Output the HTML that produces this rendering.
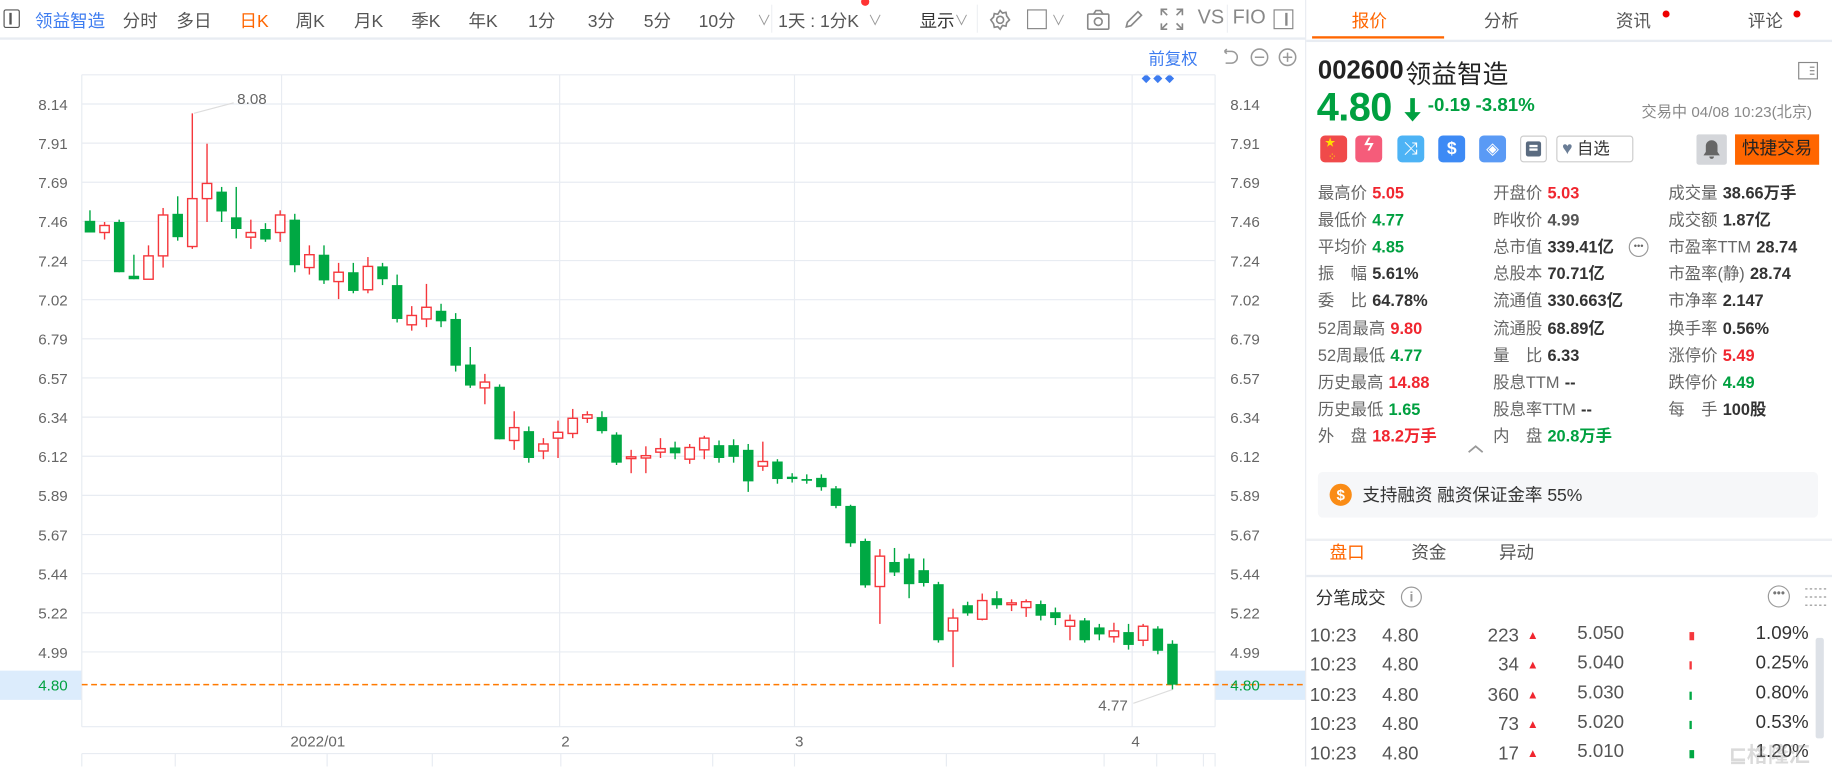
<!DOCTYPE html>
<html><head><meta charset="utf-8">
<style>
*{margin:0;padding:0;box-sizing:border-box}
html,body{width:1832px;height:766px;overflow:hidden;background:#fff}
#root{position:absolute;left:0;top:0;width:1568px;height:656px;transform:scale(1.16837);transform-origin:0 0;font-family:"Liberation Sans","Noto Sans CJK SC",sans-serif;color:#333}
.a{position:absolute;white-space:nowrap}
.tb{font-size:15px;color:#555;top:7px}
.ax{font-size:13px;color:#666}
.lab{color:#666;font-size:14px}
.v{font-weight:bold;font-size:14px}
.r{color:#f0262f}.g{color:#00a040}.d{color:#333}
.row{font-size:16px;color:#555}
</style></head><body><div id="root">
<div class="a" style="left:3px;top:8px;width:14px;height:16px;border:1.5px solid #555;border-radius:2px"></div>
<div class="a" style="left:8px;top:11px;width:2px;height:10px;background:#555"></div>
<div class="a tb" style="left:30px;color:#3d7cf0">领益智造</div>
<div class="a tb" style="left:105px">分时</div>
<div class="a tb" style="left:151px">多日</div>
<div class="a tb" style="left:205px;color:#ff6600">日K</div>
<div class="a tb" style="left:253px">周K</div>
<div class="a tb" style="left:303px">月K</div>
<div class="a tb" style="left:352px">季K</div>
<div class="a tb" style="left:401px">年K</div>
<div class="a tb" style="left:452px">1分</div>
<div class="a tb" style="left:503px">3分</div>
<div class="a tb" style="left:551px">5分</div>
<div class="a tb" style="left:598px">10分</div>
<div class="a tb" style="left:648px;font-size:12px;top:9px;color:#999">∨</div>
<div class="a" style="left:660px;top:4px;width:1px;height:24px;background:#eef0f3"></div>
<div class="a tb" style="left:666px">1天 : 1分K</div>
<div class="a tb" style="left:743px;font-size:12px;top:9px;color:#999">∨</div>
<div class="a" style="left:737px;top:-2px;width:7px;height:7px;border-radius:50%;background:#f33"></div>
<div class="a tb" style="left:787px;color:#333">显示</div>
<div class="a tb" style="left:817px;font-size:12px;top:9px;color:#999">∨</div>
<div class="a" style="left:836px;top:4px;width:1px;height:24px;background:#eef0f3"></div>
<svg class="a" style="left:846px;top:7px" width="20" height="20" viewBox="0 0 20 20" fill="none" stroke="#888" stroke-width="1.4"><circle cx="10" cy="10" r="3"/><path d="M10 2l2 2.2 3-.6.6 3L18 10l-2.4 2.4-.6 3-3-.6L10 18l-2-2.2-3 .6-.6-3L2 10l2.4-2.4.6-3 3 .6z"/></svg>
<div class="a" style="left:879px;top:8px;width:17px;height:17px;border:1.5px solid #888"></div>
<div class="a tb" style="left:900px;font-size:12px;top:9px;color:#999">∨</div>
<svg class="a" style="left:930px;top:8px" width="20" height="18" viewBox="0 0 20 18" fill="none" stroke="#888" stroke-width="1.4"><rect x="1" y="4" width="18" height="13" rx="1"/><path d="M6 4l2-3h4l2 3"/><circle cx="10" cy="10.5" r="3.3"/></svg>
<svg class="a" style="left:961px;top:7px" width="19" height="19" viewBox="0 0 19 19" fill="none" stroke="#888" stroke-width="1.4"><path d="M3 16l1-4L13 3l3 3-9 9z"/></svg>
<svg class="a" style="left:993px;top:7px" width="20" height="19" viewBox="0 0 20 19" fill="none" stroke="#888" stroke-width="1.4"><path d="M1 6V1h5M14 1h5v5M19 13v5h-5M6 18H1v-5M1 1l5 5M19 1l-5 5M19 18l-5-5M1 18l5-5"/></svg>
<div class="a tb" style="left:1025px;color:#888;font-size:17px;top:5px">VS</div>
<div class="a" style="left:1050px;top:4px;width:1px;height:24px;background:#eef0f3"></div>
<div class="a tb" style="left:1055px;color:#888;font-size:17px;top:5px">FIO</div>
<div class="a" style="left:1090px;top:8px;width:17px;height:17px;border:1.5px solid #888"></div>
<div class="a" style="left:1100px;top:11px;width:1.5px;height:11px;background:#888"></div>
<div class="a" style="left:0;top:32px;width:1117px;height:2px;background:#e8ecf2"></div>
<div class="a" style="left:983px;top:40px;font-size:14px;color:#3d7cf0">前复权</div>
<svg class="a" style="left:1044px;top:40px" width="70" height="18" viewBox="0 0 70 18" fill="none" stroke="#999" stroke-width="1.3"><path d="M4 4h6a5 5 0 010 10H5M4 4l2-2M4 4l2 2"/><circle cx="34" cy="9" r="7"/><path d="M30 9h8"/><circle cx="58" cy="9" r="7"/><path d="M54 9h8M58 5v8"/></svg>
<div class="a" style="left:977px;top:62px;font-size:8px;color:#3d7cf0;letter-spacing:2px">◆◆◆</div>
<svg class="a" style="left:0;top:0" width="1117" height="656" id="ch"></svg>
<div class="a" style="left:1117px;top:0;width:1px;height:656px;background:#e8ecf2"></div>
<div class="a" style="left:1118px;top:34px;width:450px;height:1.5px;background:#e8ecf2"></div>
<div class="a" style="left:1157px;top:7px;font-size:15px;color:#ff6600">报价</div>
<div class="a" style="left:1123px;top:31px;width:113px;height:2px;background:#ff6600"></div>
<div class="a" style="left:1270px;top:7px;font-size:15px;color:#555">分析</div>
<div class="a" style="left:1383px;top:7px;font-size:15px;color:#555">资讯</div>
<div class="a" style="left:1423px;top:9px;width:6px;height:6px;border-radius:50%;background:#e00"></div>
<div class="a" style="left:1496px;top:7px;font-size:15px;color:#555">评论</div>
<div class="a" style="left:1535px;top:9px;width:6px;height:6px;border-radius:50%;background:#e00"></div>
<div class="a" style="left:1128px;top:47px;font-size:22px;font-weight:bold;color:#222">002600</div>
<div class="a" style="left:1203px;top:46px;font-size:22px;color:#222">领益智造</div>
<div class="a" style="left:1539px;top:53px;width:17px;height:15px;border:1.3px solid #888"></div>
<div class="a" style="left:1549px;top:57px;width:4px;height:1.3px;background:#888;box-shadow:0 3px #888,0 6px #888"></div>
<div class="a" style="left:1127px;top:73px;font-size:34px;font-weight:bold;color:#00a040;letter-spacing:-0.5px">4.80</div>
<svg class="a" style="left:1200px;top:83px" width="18" height="22" viewBox="0 0 18 22"><path d="M7 1h4v12h5l-7 8-7-8h5z" fill="#00a040"/></svg>
<div class="a" style="left:1222px;top:82px;font-size:16px;font-weight:bold;color:#00a040">-0.19 -3.81%</div>
<div class="a" style="left:1405px;top:85px;font-size:13px;color:#888">交易中 04/08 10:23(北京)</div>
<div class="a" style="left:1130px;top:116px;width:23px;height:23px;border-radius:4px;background:#f04a4a;color:#ffde00;font-size:9px;line-height:12px;padding-left:4px">★<br>&nbsp;⁘</div>
<div class="a" style="left:1160px;top:116px;width:23px;height:23px;border-radius:4px;background:#f55c7a;color:#fff;font-size:15px;text-align:center;font-weight:bold;font-style:italic">ϟ</div>
<div class="a" style="left:1196px;top:116px;width:23px;height:23px;border-radius:4px;background:#4db3f5;color:#fff;font-size:15px;text-align:center;line-height:23px">⤨</div>
<div class="a" style="left:1231px;top:116px;width:23px;height:23px;border-radius:4px;background:#3d8af5;color:#fff;font-size:15px;text-align:center;line-height:23px;font-weight:bold">$</div>
<div class="a" style="left:1266px;top:116px;width:23px;height:23px;border-radius:4px;background:#5a9af5;color:#fff;font-size:14px;text-align:center;line-height:23px">◈</div>
<div class="a" style="left:1301px;top:116px;width:23px;height:23px;border-radius:3px;border:1px solid #ccc;"></div>
<div class="a" style="left:1306px;top:121px;width:13px;height:13px;background:#5a6b80;border-radius:2px"></div>
<div class="a" style="left:1309px;top:124px;width:7px;height:1.5px;background:#fff;box-shadow:0 3px #fff"></div>
<div class="a" style="left:1332px;top:116px;width:66px;height:23px;border-radius:3px;border:1px solid #ccc;font-size:14px;line-height:21px;padding-left:4px;color:#333"><span style="color:#6a7d96;font-size:15px">♥</span> 自选</div>
<div class="a" style="left:1452px;top:115px;width:26px;height:26px;border-radius:2px;background:#d4d6da"></div>
<svg class="a" style="left:1457px;top:119px" width="16" height="18" viewBox="0 0 16 18"><path d="M8 1a5 5 0 015 5v5l2 3H1l2-3V6a5 5 0 015-5zM6 15h4a2 2 0 01-4 0z" fill="#666"/></svg>
<div class="a" style="left:1485px;top:115px;width:72px;height:26px;background:#ff6600;color:#222;font-size:15px;line-height:26px;text-align:center">快捷交易</div>
<div id="stats"></div>
<svg class="a" style="left:1256px;top:380px" width="14" height="8" viewBox="0 0 14 8"><path d="M1 7l6-5 6 5" fill="none" stroke="#999" stroke-width="1.5"/></svg>
<div class="a" style="left:1128px;top:404px;width:428px;height:39px;background:#f6f7f9;border-radius:4px"></div>
<div class="a" style="left:1138px;top:414px;width:19px;height:19px;border-radius:50%;background:#fa8c16;color:#fff;font-size:13px;font-weight:bold;text-align:center;line-height:19px">$</div>
<div class="a" style="left:1166px;top:413px;font-size:15px;color:#333">支持融资 融资保证金率 55%</div>
<div class="a" style="left:1118px;top:461px;width:450px;height:2px;background:#eef0f3"></div>
<div class="a" style="left:1138px;top:462px;font-size:15px;color:#ff6600">盘口</div>
<div class="a" style="left:1208px;top:462px;font-size:15px;color:#555">资金</div>
<div class="a" style="left:1283px;top:462px;font-size:15px;color:#555">异动</div>
<div class="a" style="left:1118px;top:492px;width:450px;height:1.5px;background:#e8ecf2"></div>
<div class="a" style="left:1126px;top:501px;font-size:15px;color:#333">分笔成交</div>
<div class="a" style="left:1199px;top:502px;width:18px;height:18px;border-radius:50%;border:1.3px solid #999;font-size:12px;color:#999;text-align:center;line-height:16px;font-weight:bold">i</div>
<div class="a" style="left:1513px;top:501px;width:19px;height:19px;border-radius:50%;border:1.3px solid #999;font-size:10px;color:#777;text-align:center;line-height:14px">•••</div>
<svg class="a" style="left:1545px;top:502px" width="20" height="18" viewBox="0 0 20 18" stroke="#aaa" stroke-width="1.3" stroke-dasharray="2 2"><path d="M0 2h20M0 9h20M0 16h20"/></svg>
<div id="trades"></div>
<div class="a" style="left:1554px;top:546px;width:7px;height:86px;background:#dde1e7;border-radius:2px"></div>
<div class="a" style="left:1480px;top:632px;font-size:18px;color:rgba(150,150,150,0.35);font-weight:bold">⊑格隆汇</div>
</div>
<script>
var s=document.getElementById('ch'),h='';
var labs=['8.14','7.91','7.69','7.46','7.24','7.02','6.79','6.57','6.34','6.12','5.89','5.67','5.44','5.22','4.99'];
h+='<rect x="0" y="574" width="70" height="25" fill="#dcecfc"/><rect x="1040" y="574" width="77" height="25" fill="#dcecfc"/>';
h+='<path d="M70 64H1040M70 622H1040M70 64V622M1040 64V622M241 64V622M479 64V622M680 64V622M969 64V622" stroke="#e8ecf2" fill="none"/>';
h+='<path d="M70 645H1040V656M70 645V656M150 645V656M280 645V656M370 645V656M480 645V656M610 645V656M680 645V656M810 645V656M945 645V656M990 645V656M1030 645V656" stroke="#e8ecf2" fill="none"/>';
labs.forEach(function(l,i){var y=89+i*33.5;h+='<path d="M70 '+y+'H1040" stroke="#e8ecf2"/>';
h+='<text x="58" y="'+(y+5)+'" text-anchor="end" font-size="13" fill="#666">'+l+'</text><text x="1053" y="'+(y+5)+'" font-size="13" fill="#666">'+l+'</text>';});
h+='<path d="M70 586H1117" stroke="#ff7a00" stroke-width="1.3" stroke-dasharray="5 3"/>';
h+='<text x="58" y="591" text-anchor="end" font-size="13" fill="#00a040">4.80</text><text x="1053" y="591" font-size="13" fill="#00a040">4.80</text>';
[['2022/01',272],['2',484],['3',684],['4',972]].forEach(function(t){h+='<text x="'+t[1]+'" y="639" text-anchor="middle" font-size="13" fill="#666">'+t[0]+'</text>'});
h+='<path d="M166 97L200 88" stroke="#ddd"/><text x="203" y="89" font-size="13" fill="#666">8.08</text>';
h+='<path d="M970 602L1004 590" stroke="#ddd"/><text x="940" y="608" font-size="13" fill="#666">4.77</text>';
var c=[
['G',189,199,180,199],['R',193,199,190,205],['G',190,233,188,233],['G',236,239,218,239],['R',219,239,210,239],['R',184,219,178,229],['G',183,203,168,206],['R',170,211,97,213],['R',157,170,123,190],['G',164,181,160,190],['G',186,196,160,204],['R',199,203,188,213],['G',196,205,191,207],['R',184,199,180,207],['G',188,227,183,233],['R',218,229,210,235],['G',218,240,210,243],['R',233,241,225,256],['G',233,249,225,251],['R',228,248,220,251],['G',228,239,225,244],['G',244,273,235,276],['R',270,278,262,283],['R',263,273,243,280],['G',266,275,260,280],['G',273,313,268,318],['G',312,330,297,332],['R',327,332,320,346],['G',331,376,329,376],['R',366,377,352,385],['G',369,392,365,396],['R',380,386,375,393],['R',370,375,360,392],['R',358,371,350,375],['R',355,358,352,362],['G',357,369,352,371],['G',372,396,370,398],['R',391,392,385,405],['R',390,392,382,405],['R',384,387,375,392],['G',383,388,378,393],['R',383,393,380,397],['R',375,385,373,393],['G',381,392,377,396],['G',381,391,376,396],['G',385,412,380,421],['R',395,399,378,403],['G',395,410,393,414],['G',408,410,405,413],['G',410,411,406,414],['G',409,417,406,420],['G',418,433,416,435],['G',433,465,432,468],['G',463,501,461,503],['R',476,502,470,534],['G',481,490,469,493],['G',478,500,474,512],['G',488,499,478,502],['G',500,548,498,550],['R',529,540,521,571],['G',518,525,515,527],['R',514,530,508,531],['G',512,518,506,521],['R',516,517,513,523],['R',515,520,513,528],['G',517,527,514,531],['G',524,529,520,535],['R',531,536,526,548],['G',531,548,529,550],['G',537,543,534,548],['R',540,545,533,550],['G',541,552,534,556],['R',536,548,534,553],['G',538,557,536,560],['G',551,586,548,590]];
c.forEach(function(k,i){var x=77+i*12.52,col=k[0]=='G'?'#00a843':'#f5373c';
h+='<path d="M'+x.toFixed(1)+' '+k[3]+'V'+k[4]+'" stroke="'+col+'" stroke-width="1.2"/>';
var bh=Math.max(k[2]-k[1],1.5);
if(k[0]=='G')h+='<rect x="'+(x-4.5).toFixed(1)+'" y="'+k[1]+'" width="9" height="'+bh+'" fill="'+col+'"/>';
else h+='<rect x="'+(x-4).toFixed(1)+'" y="'+k[1]+'" width="8" height="'+bh+'" fill="#fff" stroke="'+col+'" stroke-width="1.2"/>';});
s.innerHTML=h;
var st=[
[['最高价','5.05','r'],['开盘价','5.03','r'],['成交量','38.66万手','d']],
[['最低价','4.77','g'],['昨收价','4.99','d" style="color:#555'],['成交额','1.87亿','d']],
[['平均价','4.85','g'],['总市值','339.41亿','d'],['市盈率TTM','28.74','d']],
[['振　幅','5.61%','d'],['总股本','70.71亿','d'],['市盈率(静)','28.74','d']],
[['委　比','64.78%','d'],['流通值','330.663亿','d'],['市净率','2.147','d']],
[['52周最高','9.80','r'],['流通股','68.89亿','d'],['换手率','0.56%','d']],
[['52周最低','4.77','g'],['量　比','6.33','d'],['涨停价','5.49','r']],
[['历史最高','14.88','r'],['股息TTM','--','d'],['跌停价','4.49','g']],
[['历史最低','1.65','g'],['股息率TTM','--','d'],['每　手','100股','d']],
[['外　盘','18.2万手','r'],['内　盘','20.8万手','g']]];
var o='';st.forEach(function(r,i){var y=155+i*23.1;r.forEach(function(c,j){var x=1128+j*150;
o+='<div class="a" style="left:'+x+'px;top:'+y+'px"><span class="lab">'+c[0]+'</span> <span class="v '+c[2]+'">'+c[1]+'</span></div>';});});
o+='<div class="a" style="left:1394px;top:203px;width:17px;height:17px;border-radius:50%;border:1.2px solid #999;font-size:8px;color:#666;text-align:center;line-height:14px">•••</div>';
document.getElementById('stats').innerHTML=o;
var tr=[['223','5.050','1.09%','#f5373c'],['34','5.040','0.25%','#f5373c'],['360','5.030','0.80%','#00a843'],['73','5.020','0.53%','#00a843'],['17','5.010','1.20%','#00a843']];
var t='';tr.forEach(function(r,i){var y=536+i*25.3;
t+='<div class="a row" style="left:1121px;top:'+y+'px">10:23</div><div class="a row g" style="left:1183px;top:'+y+'px">4.80</div>';
t+='<div class="a row r" style="left:1240px;width:60px;text-align:right;top:'+y+'px">'+r[0]+'</div><div class="a r" style="left:1307px;top:'+(y+3)+'px;font-size:10px">▲</div>';
t+='<div class="a row r" style="left:1350px;top:'+(y-2)+'px">'+r[1]+'</div>';
t+='<div class="a" style="left:1446px;top:'+(y+5)+'px;width:'+(i==0||i==4?4:2)+'px;height:7px;background:'+r[3]+'"></div>';
t+='<div class="a row" style="left:1480px;width:68px;text-align:right;top:'+(y-2)+'px;color:#333">'+r[2]+'</div>';});
document.getElementById('trades').innerHTML=t;
</script>
</body></html>
